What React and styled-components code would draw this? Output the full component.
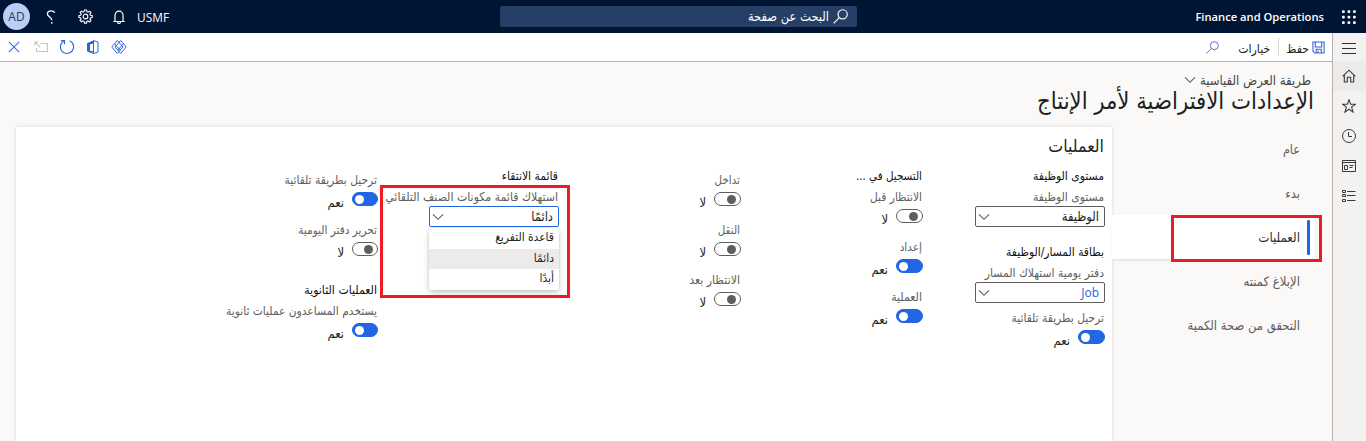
import React from 'react';
import styled, { createGlobalStyle, css } from 'styled-components';

const GlobalStyle = createGlobalStyle`
  * { box-sizing: border-box; }
  html, body { margin: 0; padding: 0; }
  body {
    overflow: hidden;
    background: #faf9f8;
    font-family: "DejaVu Sans Condensed", "DejaVu Sans", sans-serif;
    color: #201f1e;
  }
`;

const Shell = styled.div`
  width: 1366px;
  height: 441px;
  display: flex;
  flex-direction: column;
  direction: rtl;
  overflow: hidden;
`;

/* ---------- top bar ---------- */
const TopBar = styled.header`
  flex: none;
  height: 33px;
  display: grid;
  grid-template-columns: 509px 357px 500px;
  align-items: center;
  background: #001433;
  color: #fff;
`;

const BrandArea = styled.div`
  display: flex;
  align-items: center;
  gap: 18px;
  padding-right: 10px;
`;

const Brand = styled.span`
  font: 600 11.2px/16px "Open Sans", sans-serif;
  direction: ltr;
  padding-top: 1px;
`;

const SearchBox = styled.div`
  height: 21px;
  display: flex;
  align-items: center;
  gap: 4px;
  padding-right: 9px;
  border-radius: 2px;
  background: #263f67;
  font-size: 12.8px;
  line-height: 21px;
`;

const UserTools = styled.div`
  display: flex;
  direction: ltr;
  align-items: center;
  padding-left: 3px;
`;

const Avatar = styled.span`
  width: 27px;
  height: 27px;
  margin-right: 4px;
  border-radius: 50%;
  background: #b9cdf8;
  color: #303a50;
  font: 400 12px/27px "Open Sans", sans-serif;
  text-align: center;
`;

const ToolIcon = styled.span`
  display: flex;
  justify-content: center;
  width: 34px;
`;

const Company = styled.span`
  font: 400 11.9px/16px "Open Sans", sans-serif;
  padding-left: 1px;
`;

/* ---------- frame ---------- */
const Frame = styled.div`
  flex: 1;
  display: flex;
  min-height: 0;
`;

const Rail = styled.nav`
  flex: none;
  width: 34px;
  display: flex;
  flex-direction: column;
  background: #f3f2f1;
  border-left: 1px solid #b5b2b0;
`;

const RailItem = styled.div`
  height: ${(p) => p.$h || 30}px;
  display: flex;
  align-items: center;
  justify-content: center;
  padding-right: 1px;
  background: ${(p) => (p.$active ? '#edebe9' : 'transparent')};
`;

const Main = styled.main`
  flex: 1;
  min-width: 0;
  display: flex;
  flex-direction: column;
`;

const ActionBar = styled.div`
  flex: none;
  height: 29px;
  display: flex;
  justify-content: space-between;
  background: #fff;
  border-bottom: 1px solid #b5b2b0;
`;

const ActionGroup = styled.div`
  display: flex;
  align-items: center;
  padding-right: 7px;
`;

const ActionLabel = styled.span`
  font-size: 12.2px;
  line-height: 18px;
  padding-top: 3px;
  margin-right: ${(p) => p.$before}px;
`;

const Divider = styled.span`
  width: 1px;
  height: 18px;
  margin-right: 7px;
  background: #d8d6d4;
`;

const FindIcon = styled.span`
  display: flex;
  margin-right: 19px;
`;

const SystemActions = styled.div`
  display: flex;
  direction: ltr;
  align-items: center;
`;

const SystemAction = styled.span`
  width: ${(p) => p.$w || 26}px;
  display: flex;
  justify-content: center;
`;

/* ---------- page heading ---------- */
const ViewPicker = styled.div`
  flex: none;
  display: flex;
  align-items: center;
  gap: 4px;
  height: 16px;
  margin: 11px 21px 0 0;
  font-size: 13px;
  line-height: 16px;
  color: #484644;
  & > svg { margin-top: -2px; }
`;

const PageTitle = styled.h1`
  flex: none;
  margin: 0 18px 0 0;
  height: 38px;
  font-size: 23.6px;
  font-weight: 400;
  line-height: 25px;
  white-space: nowrap;
`;

/* ---------- body ---------- */
const Body = styled.div`
  flex: 1;
  display: flex;
  min-height: 0;
`;

const TabList = styled.div`
  flex: none;
  width: 220px;
  display: flex;
  flex-direction: column;
`;

const Tab = styled.div`
  position: relative;
  height: 44px;
  display: flex;
  align-items: center;
  padding: 1px 32px 0 0;
  font-size: ${(p) => p.$size || 13}px;
  line-height: 20px;
  color: #605e5c;
  white-space: nowrap;
  ${(p) =>
    p.$active &&
    css`
      z-index: 1;
      margin-right: 17px;
      padding-right: 15px;
      color: #323130;
      background: #fff;
      box-shadow: 0 2px 3px -1px rgba(0, 0, 0, 0.12);
    `}
`;

const ActiveMark = styled.span`
  position: absolute;
  top: 5px;
  right: 5px;
  width: 3px;
  height: 35px;
  border-radius: 1px;
  background: #2266e3;
`;

const Highlight = styled.span`
  position: absolute;
  z-index: 3;
  border: 3px solid #ed1c24;
  pointer-events: none;
`;

const TabHighlight = styled(Highlight)`
  top: 0;
  right: -7px;
  width: 151px;
  height: 47px;
`;

const FieldHighlight = styled(Highlight)`
  top: 17px;
  right: -11px;
  width: 190px;
  height: 113px;
`;

const Card = styled.section`
  width: 1096px;
  padding: 8px 7px 0 0;
  background: #fff;
  box-shadow: 0 0 4px rgba(0, 0, 0, 0.13);
`;

const CardTitle = styled.h2`
  margin: 0 1px 0 0;
  height: 33px;
  font-size: 17.6px;
  font-weight: 400;
  line-height: 22px;
`;

const Columns = styled.div`
  display: grid;
  grid-template-columns: repeat(5, 130px);
  column-gap: 52px;
`;

const Column = styled.div`
  position: relative;
  padding-top: ${(p) => p.$top || 0}px;
  &:last-child { margin-right: -1px; }
`;

const GroupTitle = styled.h3`
  margin: ${(p) => p.$before || 0}px 1px 5px 0;
  height: 16px;
  font-size: ${(p) => p.$size || 12}px;
  font-weight: 400;
  line-height: 16px;
  color: #11100f;
  white-space: nowrap;
`;

const Field = styled.div`
  margin-top: ${(p) => p.$before || 0}px;
`;

const Label = styled.div`
  height: 16px;
  margin-right: 1px;
  font-size: ${(p) => p.$size || 12}px;
  line-height: 16px;
  color: #605e5c;
  white-space: nowrap;
`;

const Select = styled.div`
  height: 21px;
  margin-top: 1px;
  display: flex;
  align-items: center;
  justify-content: space-between;
  padding: 0 5px 0 2px;
  border: 1px solid ${(p) => (p.$open ? '#2266e3' : '#605e5c')};
  border-radius: 2px;
  background: #fff;
  font-size: 12.8px;
  line-height: 18px;
`;

const SelectText = styled.span`
  padding-top: 1px;
`;

const LinkText = styled.span`
  font: 400 12px/18px "Open Sans", sans-serif;
  color: #2266e3;
`;

const Menu = styled.div`
  position: absolute;
  z-index: 2;
  top: 60px;
  right: 0;
  width: 130px;
  height: 62px;
  border-radius: 2px;
  background: #fff;
  box-shadow: 0 3px 6px rgba(0, 0, 0, 0.2), 0 0 2px rgba(0, 0, 0, 0.15);
`;

const Option = styled.div`
  height: 20.6px;
  padding-right: 5px;
  font-size: 11.9px;
  line-height: 19px;
  background: ${(p) => (p.$selected ? '#edebe9' : 'transparent')};
`;

const ToggleRow = styled.div`
  display: flex;
  height: 14px;
  margin-top: 4px;
  gap: 8px;
`;

const Switch = styled.span`
  flex: none;
  width: 27px;
  height: 14px;
  display: flex;
  align-items: center;
  justify-content: ${(p) => (p.$on ? 'flex-end' : 'flex-start')};
  padding: 0 ${(p) => (p.$on ? 2 : 4)}px;
  border: 1px solid ${(p) => (p.$on ? '#2266e3' : '#605e5c')};
  border-radius: 7px;
  background: ${(p) => (p.$on ? '#2266e3' : '#fff')};
  ${Column}:last-child & { width: 26px; }
`;

const Knob = styled.span`
  width: 9px;
  height: 9px;
  border-radius: 50%;
  background: ${(p) => (p.$on ? '#fff' : '#605e5c')};
`;

const ToggleValue = styled.span`
  font-size: 12.9px;
  line-height: 18px;
  padding-top: 2px;
`;

/* ---------- icons ---------- */
const Icon = ({ s = 14, c = 'currentColor', w = 1, vb = 14, children }) => (
  <svg width={s} height={s} viewBox={`0 0 ${vb} ${vb}`} fill="none" stroke={c} strokeWidth={w}>
    {children}
  </svg>
);

const Chevron = () => (
  <svg width="12" height="8" viewBox="0 0 12 8" fill="none" stroke="#605e5c" strokeWidth="1.1">
    <path d="M1 1.3 6 6.3 11 1.3" />
  </svg>
);

const Waffle = () => (
  <svg width="14" height="14" viewBox="0 0 14 14" fill="#fff">
    {[0, 5.5, 11].map((y) =>
      [0, 5.5, 11].map((x) => <rect key={`${x}-${y}`} x={x} y={y + 0.2} width="2.8" height="2.8" rx="1" />)
    )}
  </svg>
);

const Magnifier = ({ s, c, w }) => (
  <Icon s={s} c={c} w={w}>
    <circle cx="9" cy="5" r="4.3" />
    <path d="M5.9 8 .6 13.4" />
  </Icon>
);

const Bell = () => (
  <Icon s={14} c="#fff" w={1.2}>
    <path d="M1.300 11.500h11.400M3 11.500V5.200a4 4 0 0 1 8 0v6.300M5.500 12a1.500 1.500 0 0 0 3 0" />
  </Icon>
);

const Gear = () => (
  <Icon s={15} c="#fff" w={1.200} vb={16}>
    <path d="M6.900 1h2.200l.4 1.900 1.100.5 1.700-1.100 1.500 1.500-1.100 1.700.5 1.100 1.900.4v2.100l-1.900.4-.5 1.100 1.100 1.700-1.500 1.500-1.700-1.100-1.100.5L9.100 15H6.900l-.4-1.900-1.100-.5-1.700 1.100-1.500-1.500 1.100-1.700-.5-1.100L1 9.100V7l1.900-.4.5-1.100-1.200-1.700 1.500-1.500 1.700 1.100 1.100-.5z" />
    <circle cx="8" cy="8" r="2.500" />
  </Icon>
);

const Help = () => (
  <Icon s={14} c="#fff" w={1.300}>
    <path d="M10.800 2.700C10 1.300 8.600.8 7 .8 4.600.8 3.400 2.300 3.400 4c0 2.700 4.400 3 4.400 6.200" />
    <path d="M7.800 12v1.700" />
  </Icon>
);

const Save = () => (
  <Icon s={13} c="#2f5fd6" w={1.100}>
    <path d="M1 1h12v12H3L1 11zM3.500 1v5.500h7V1M4.500 13V9h5.500v4M6.500 10.500V13" />
  </Icon>
);

const Close = () => (
  <Icon s={12} c="#3a66d9" w={1.200}>
    <path d="m1 1 12 12M13 1 1 13" />
  </Icon>
);

const PopOut = () => (
  <Icon s={14} c="#c8c6c4" w={1.200}>
    <path d="M6.500 3.500h7v8h-11V8M1 2l5 5M1 5.500V2h3.500" />
  </Icon>
);

const Refresh = () => (
  <Icon s={16} c="#2f66e0" w={1.200} vb={16}>
    <path d="M10.500 1.800A6.600 6.600 0 1 1 4.700 2.200" />
    <path d="M1.800 1.600h3.700v3.700" />
  </Icon>
);

const Office = () => (
  <svg width="13" height="14" viewBox="0 0 13 14">
    <path d="M1 3.600 7.500.6v2.600L4 4.200v6.200L1 11z" fill="#2266e3" />
    <path d="M7.500.6 12 2v10l-4.500 1.500L1.600 11.200l5.900.4z" fill="#fff" stroke="#2266e3" strokeWidth="1" />
    <path d="M1 3.600 7.500.6v2.600L4 4.200v6.200L1 11z" fill="#2266e3" />
    <path d="M7.500 1v12" stroke="#2266e3" strokeWidth="1" />
  </svg>
);

const Diamonds = () => (
  <Icon s={16} c="#2f66e0" w={1} vb={16}>
    <path d="M6.300 1.500 12 8l-5.700 6.500L.8 8z" />
    <path d="M9.700 1.500 15.200 8l-5.500 6.500L4 8z" />
    <path d="m3.600 4.800 5.800 6.500M12.400 4.800l-5.800 6.500" />
  </Icon>
);

const Hamburger = () => (
  <Icon s={14} c="#323130">
    <path d="M0 3.500h14M0 8.500h14M0 13.500h14" />
  </Icon>
);

const Home = () => (
  <Icon c="#3b3a39" w={1.100}>
    <path d="M.6 7.300 7 1.200l6.400 6.100M2.300 6v7h3V8.300h3.400V13h3V6" />
  </Icon>
);

const Star = () => (
  <Icon c="#3b3a39" w={1.050}>
    <path d="m7 .7 1.600 4.500h4.900L9.600 8.100l1.500 5L7 10.200l-4.100 2.900 1.500-5L.5 5.200h4.900z" />
  </Icon>
);

const Clock = () => (
  <Icon c="#3b3a39">
    <circle cx="7" cy="7" r="6.500" />
    <path d="M6.500 3v4.500h3.500" />
  </Icon>
);

const Workspace = () => (
  <Icon c="#3b3a39">
    <path d="M.5 1.500h13v11H.5zM.5 3.500h13M2.500 6.500h3v4h-3zM7.500 6.500h4M7.500 8.500h3" />
  </Icon>
);

const Modules = () => (
  <Icon c="#3b3a39">
    <path d="M.5 1.500h3v2h-3zM.5 5.500h3v2h-3zM.5 10.500h3v2h-3zM5 2.500h8.500M5 6.500h8.500M5 11.500h8.500" />
  </Icon>
);

/* ---------- composites ---------- */
function Toggle({ label, on, before, size }) {
  return (
    <Field $before={before}>
      <Label $size={size}>{label}</Label>
      <ToggleRow>
        <Switch $on={on}>
          <Knob $on={on} />
        </Switch>
        <ToggleValue>{on ? 'نعم' : 'لا'}</ToggleValue>
      </ToggleRow>
    </Field>
  );
}

function Dropdown({ label, open, size, children }) {
  return (
    <Field>
      <Label $size={size}>{label}</Label>
      <Select $open={open}>
        {children}
        <Chevron />
      </Select>
    </Field>
  );
}

export default function App() {
  return (
    <Shell dir="rtl" lang="ar">
      <GlobalStyle />
      <TopBar>
        <BrandArea>
          <Waffle />
          <Brand>Finance and Operations</Brand>
        </BrandArea>
        <SearchBox>
          <Magnifier s={15} c="#fff" w={1.100} />
          <span>البحث عن صفحة</span>
        </SearchBox>
        <UserTools>
          <Avatar>AD</Avatar>
          <ToolIcon><Help /></ToolIcon>
          <ToolIcon><Gear /></ToolIcon>
          <ToolIcon><Bell /></ToolIcon>
          <Company>USMF</Company>
        </UserTools>
      </TopBar>
      <Frame>
        <Rail>
          <RailItem $h={28}><Hamburger /></RailItem>
          <RailItem $active><Home /></RailItem>
          <RailItem><Star /></RailItem>
          <RailItem><Clock /></RailItem>
          <RailItem><Workspace /></RailItem>
          <RailItem><Modules /></RailItem>
        </Rail>
        <Main>
          <ActionBar>
            <ActionGroup>
              <Save />
              <ActionLabel $before={3}>حفظ</ActionLabel>
              <Divider />
              <ActionLabel $before={8}>خيارات</ActionLabel>
              <FindIcon><Magnifier s={13} c="#4a63d0" w={1} /></FindIcon>
            </ActionGroup>
            <SystemActions>
              <SystemAction $w={27}><Close /></SystemAction>
              <SystemAction $w={27}><PopOut /></SystemAction>
              <SystemAction $w={25}><Refresh /></SystemAction>
              <SystemAction $w={27}><Office /></SystemAction>
              <SystemAction><Diamonds /></SystemAction>
            </SystemActions>
          </ActionBar>
          <ViewPicker>
            <span>طريقة العرض القياسية</span>
            <Chevron />
          </ViewPicker>
          <PageTitle>الإعدادات الافتراضية لأمر الإنتاج</PageTitle>
          <Body>
            <TabList>
              <Tab $size={12.500}>عام</Tab>
              <Tab $size={12.800}>بدء</Tab>
              <Tab $active $size={13.200}>
                العمليات
                <ActiveMark />
                <TabHighlight />
              </Tab>
              <Tab>الإبلاغ كمنته</Tab>
              <Tab $size={12.900}>التحقق من صحة الكمية</Tab>
            </TabList>
            <Card>
              <CardTitle>العمليات</CardTitle>
              <Columns>
                <Column>
                  <GroupTitle>مستوى الوظيفة</GroupTitle>
                  <Dropdown label="مستوى الوظيفة">
                    <SelectText>الوظيفة</SelectText>
                  </Dropdown>
                  <GroupTitle $before={17} $size={11.900}>بطاقة المسار/الوظيفة</GroupTitle>
                  <Dropdown label="دفتر يومية استهلاك المسار">
                    <LinkText>Job</LinkText>
                  </Dropdown>
                  <Toggle on before={7} size={11.900} label="ترحيل بطريقة تلقائية" />
                </Column>
                <Column>
                  <GroupTitle $size={11.500}>التسجيل في ...</GroupTitle>
                  <Toggle label="الانتظار قبل" size={11.800} />
                  <Toggle on before={16} label="إعداد" size={11.700} />
                  <Toggle on before={16} label="العملية" size={12.200} />
                </Column>
                <Column $top={4}>
                  <Toggle label="تداخل" size={11.500} />
                  <Toggle before={16} label="النقل" size={11.500} />
                  <Toggle before={16} label="الانتظار بعد" size={12.200} />
                </Column>
                <Column>
                  <GroupTitle>قائمة الانتقاء</GroupTitle>
                  <Dropdown open size={12.170} label="استهلاك قائمة مكونات الصنف التلقائي">
                    <SelectText>دائمًا</SelectText>
                  </Dropdown>
                  <Menu>
                    <Option>قاعدة التفريغ</Option>
                    <Option $selected>دائمًا</Option>
                    <Option>أبدًا</Option>
                  </Menu>
                  <FieldHighlight />
                </Column>
                <Column $top={4}>
                  <Toggle on label="ترحيل بطريقة تلقائية" size={11.900} />
                  <Toggle before={16} label="تحرير دفتر اليومية" size={11.700} />
                  <GroupTitle $before={26} $size={12.200}>العمليات الثانوية</GroupTitle>
                  <Toggle on label="يستخدم المساعدون عمليات ثانوية" size={11.860} />
                </Column>
              </Columns>
            </Card>
          </Body>
        </Main>
      </Frame>
    </Shell>
  );
}
